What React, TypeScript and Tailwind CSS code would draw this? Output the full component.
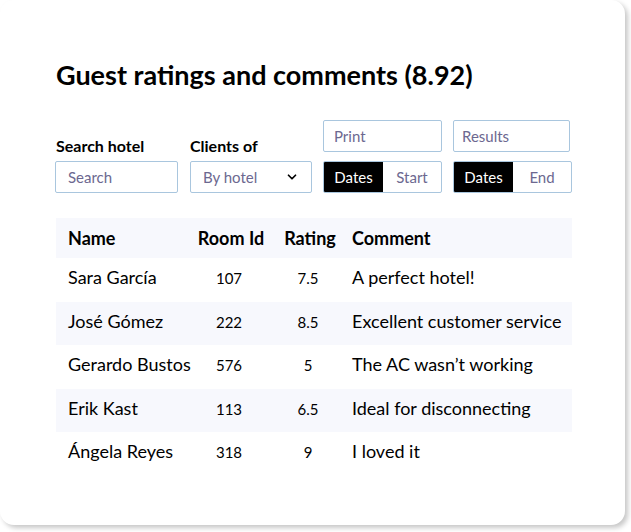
import { ChevronDown } from "lucide-react";

const rows = [
  { name: "Sara García", room: "107", rating: "7.5", comment: "A perfect hotel!" },
  { name: "José Gómez", room: "222", rating: "8.5", comment: "Excellent customer service" },
  { name: "Gerardo Bustos", room: "576", rating: "5", comment: "The AC wasn’t working" },
  { name: "Erik Kast", room: "113", rating: "6.5", comment: "Ideal for disconnecting" },
  { name: "Ángela Reyes", room: "318", rating: "9", comment: "I loved it" },
];

const field = "h-8 rounded-[2px] border border-[#a9c6de] bg-white text-[15px] text-[#6c6890]";

export default function App() {
  return (
    <div className="w-[631px] h-[532px] bg-white font-['Lato','Noto_Sans',sans-serif]">
      <div className="w-[625px] h-[525px] rounded-[14px] bg-white shadow-[3px_3px_5px_rgba(0,0,0,0.22)] pl-[55px] pr-[52px] pt-[57px]">
        <h1 className="pl-px text-[27px] leading-[36px] font-bold text-black">Guest ratings and comments (8.92)</h1>

        {/* filtros */}
        <div className="mt-[27px] flex items-end">
          <div className="flex flex-col w-[123px]">
            <span className="pl-px text-[16px] leading-[18px] font-bold text-black mb-[6px]">Search hotel</span>
            <div className={`${field} flex items-center pl-3`}>Search</div>
          </div>
          <div className="ml-[12px] flex flex-col w-[122px]">
            <span className="text-[16px] leading-[18px] font-bold text-black mb-[6px]">Clients of</span>
            <div className={`${field} flex items-center justify-between pl-3 pr-3`}>
              <span>By hotel</span>
              <ChevronDown className="w-[14px] h-[14px] text-black" strokeWidth={3} />
            </div>
          </div>
          <div className="ml-[11px] flex flex-col gap-[9px] w-[119px]">
            <div className={`${field} flex items-center pl-[10px]`}>Print</div>
            <div className={`${field} flex overflow-hidden`}>
              <span className="w-[59px] bg-black text-white flex items-center justify-center">Dates</span>
              <span className="flex-1 flex items-center justify-center">Start</span>
            </div>
          </div>
          <div className="ml-[11px] flex flex-col gap-[9px] w-[119px]">
            <div className={`${field} flex items-center pl-[8px] w-[117px]`}>Results</div>
            <div className={`${field} flex overflow-hidden`}>
              <span className="w-[59px] bg-black text-white flex items-center justify-center">Dates</span>
              <span className="flex-1 flex items-center justify-center">End</span>
            </div>
          </div>
        </div>

        {/* tabla */}
        <div className="mt-[25px] ml-px w-[516px] text-black">
          <div className="grid grid-cols-[136px_78px_80px_1fr] h-[40px] items-center bg-[#f7f8fd] text-[18px] font-bold">
            <span className="pl-3">Name</span>
            <span className="text-center">Room Id</span>
            <span className="text-center">Rating</span>
            <span className="pl-[2px]">Comment</span>
          </div>
          {rows.map((r, i) => (
            <div
              key={r.name}
              className={`grid grid-cols-[136px_78px_80px_1fr] h-[43.5px] items-center ${i % 2 === 1 ? "bg-[#f7f8fd]" : ""}`}
            >
              <span className="pl-3 text-[18px] leading-[22px] -mt-[5px]">{r.name}</span>
              <span className="text-center text-[15px] pr-1 -mt-[3px]">{r.room}</span>
              <span className="text-center text-[15px] pr-1 -mt-[3px]">{r.rating}</span>
              <span className="pl-[2px] text-[18px] leading-[22px] -mt-[5px] whitespace-nowrap">{r.comment}</span>
            </div>
          ))}
        </div>
      </div>
    </div>
  );
}
